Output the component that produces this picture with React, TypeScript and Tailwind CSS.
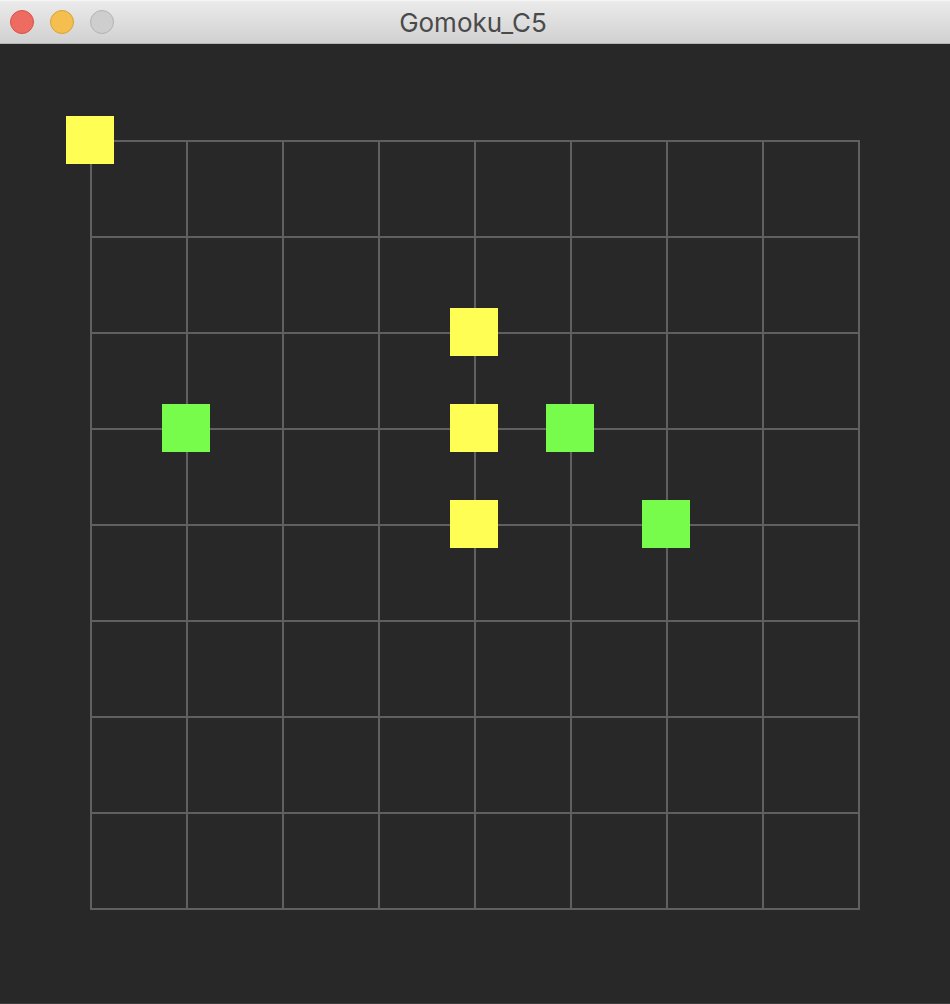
const stones = [
  { col: 0, row: 0, player: "yellow" },
  { col: 4, row: 2, player: "yellow" },
  { col: 1, row: 3, player: "green" },
  { col: 4, row: 3, player: "yellow" },
  { col: 5, row: 3, player: "green" },
  { col: 4, row: 4, player: "yellow" },
  { col: 6, row: 4, player: "green" },
];

const CELLS = 8;

function TitleBar() {
  return (
    <header className="grid h-11 grid-cols-[1fr_auto_1fr] items-center border-t border-b border-t-[#f6f6f6] border-b-[#b4b4b4] bg-linear-to-b from-[#ebebeb] to-[#d1d1d1] px-2.5">
      <div className="flex gap-4">
        <button
          type="button"
          aria-label="Close"
          className="size-6 rounded-full border border-[#d8524a] bg-[#ed6b60]"
        />
        <button
          type="button"
          aria-label="Minimize"
          className="size-6 rounded-full border border-[#d9a03c] bg-[#f5bf4f]"
        />
        <button
          type="button"
          aria-label="Zoom"
          disabled
          className="size-6 rounded-full border border-[#b3b3b3] bg-[#cecece]"
        />
      </div>
      <h1 className="pt-0.5 pr-1 font-['Inter',sans-serif] text-[26px] leading-8 text-[#4a4a4a]">
        Gomoku_C5
      </h1>
    </header>
  );
}

function Board() {
  return (
    <div className="relative grid aspect-square w-full grid-cols-8 grid-rows-8 border-t-2 border-l-2 border-[#606060]">
      {Array.from({ length: CELLS * CELLS }, (_, i) => (
        <div key={i} className="border-r-2 border-b-2 border-[#606060]" />
      ))}
      {stones.map(({ col, row, player }) => (
        <div
          key={`${col}-${row}`}
          className={`absolute -mt-[26px] -ml-[26px] size-12 ${
            player === "yellow" ? "bg-[#fffe54]" : "bg-[#77fc4c]"
          }`}
          style={{
            left: `${(col / CELLS) * 100}%`,
            top: `${(row / CELLS) * 100}%`,
          }}
        />
      ))}
    </div>
  );
}

export default function App() {
  return (
    <div className="flex min-h-screen flex-col border-b border-[#3c3c3c] bg-[#282828]">
      <TitleBar />
      <main className="px-[90px] pt-24 pb-[90px]">
        <Board />
      </main>
    </div>
  );
}
